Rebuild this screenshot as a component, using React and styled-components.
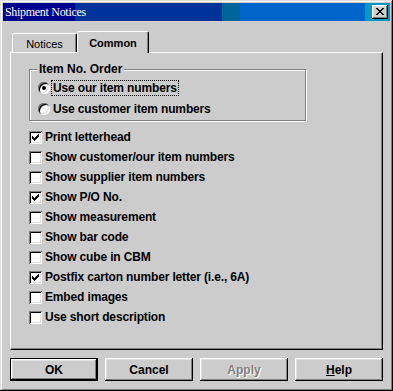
import React from 'react';
import styled, { createGlobalStyle, css } from 'styled-components';

const GlobalStyle = createGlobalStyle`
  html, body {
    margin: 0;
    padding: 0;
    background: #cccccc;
  }
  * { box-sizing: border-box; }
`;

const raised = css`
  box-shadow: inset -1px -1px #000000, inset 1px 1px #ffffff,
    inset -2px -2px #808080, inset 2px 2px #dfdfdf;
`;

const Window = styled.div`
  width: 393px;
  height: 391px;
  padding: 3px;
  background: #cccccc;
  display: flex;
  flex-direction: column;
  font-family: "Liberation Sans", Arial, sans-serif;
  font-size: 12px;
  font-weight: bold;
  color: #000;
  box-shadow: inset -1px -1px #000000, inset 1px 1px #dfdfdf,
    inset -2px -2px #808080, inset 2px 2px #ffffff;
`;

const TitleBar = styled.div`
  height: 18px;
  display: flex;
  align-items: center;
  justify-content: space-between;
  padding: 0 2px 0 2px;
  background: linear-gradient(
    to right,
    #00008e 0 72px,
    #003399 72px 219px,
    #006699 219px 237px,
    #0066cc 237px 362px,
    #0099cc 362px
  );
`;

const Title = styled.span`
  font-family: "Liberation Serif", "Times New Roman", serif;
  font-weight: normal;
  font-size: 12px;
  letter-spacing: -0.3px;
  color: #ffffff;
  line-height: 18px;
`;

const CloseButton = styled.div`
  width: 16px;
  height: 14px;
  background: #cccccc;
  display: flex;
  align-items: center;
  justify-content: center;
  padding-bottom: 1px;
  ${raised}
`;

const Body = styled.div`
  padding: 10px 7px 0 7px;
  display: flex;
  flex-direction: column;
`;

const TabStrip = styled.div`
  display: flex;
  align-items: flex-end;
  height: 21px;
  padding-left: 2px;
`;

const Tab = styled.div`
  position: relative;
  width: ${p => p.$width}px;
  height: ${p => (p.$active ? 22 : 19)}px;
  margin-bottom: ${p => (p.$active ? -1 : 0)}px;
  z-index: ${p => (p.$active ? 2 : 1)};
  background: #cccccc;
  border-top: 1px solid #ffffff;
  border-left: 1px solid #ffffff;
  border-right: 1px solid #000000;
  border-radius: 2px 2px 0 0;
  box-shadow: inset -1px 0 #808080;
  display: flex;
  align-items: center;
  justify-content: center;
  font-size: 11px;
  font-weight: ${p => (p.$active ? 'bold' : 'normal')};
  padding-top: ${p => (p.$active ? 0 : 1)}px;
`;

const Panel = styled.div`
  height: 298px;
  background: #cccccc;
  border-top: 1px solid #ffffff;
  border-left: 1px solid #ffffff;
  border-right: 1px solid #000000;
  border-bottom: 1px solid #000000;
  box-shadow: inset -1px -1px #808080;
  padding: 16px 0 0 18px;
`;

const GroupBox = styled.div`
  position: relative;
  width: 277px;
  border: 1px solid #808080;
  box-shadow: inset 1px 1px #ffffff, 1px 1px #ffffff;
  padding: 7px 0 1px 8px;
`;

const Legend = styled.span`
  position: absolute;
  top: -8px;
  left: 7px;
  padding: 0 2px;
  background: #cccccc;
  line-height: 14px;
`;

const OptionRow = styled.label`
  display: flex;
  align-items: center;
  height: ${p => p.$h}px;
  line-height: 14px;
`;

const Radio = styled.span`
  position: relative;
  width: 12px;
  height: 12px;
  flex: none;
  border-radius: 50%;
  background: #ffffff;
  box-shadow: inset 1px 1px #808080, inset -1px -1px #ffffff,
    inset 2px 2px #000000, inset -2px -2px #dfdfdf;
  margin-right: 2px;
  &::after {
    content: '';
    display: ${p => (p.$on ? 'block' : 'none')};
    position: absolute;
    left: 4px;
    top: 4px;
    width: 4px;
    height: 4px;
    border-radius: 50%;
    background: #000000;
  }
`;

const Label = styled.span`
  padding: 0 1px;
  outline: ${p => (p.$focus ? '1px dotted #000' : 'none')};
  letter-spacing: -0.15px;
`;

const CheckList = styled.div`
  margin-top: 6px;
  display: flex;
  flex-direction: column;
`;

const Box = styled.span`
  width: 13px;
  height: 13px;
  flex: none;
  background: #ffffff;
  box-shadow: inset 1px 1px #808080, inset -1px -1px #ffffff,
    inset 2px 2px #000000, inset -2px -2px #dfdfdf;
  margin-right: 2px;
  display: flex;
  align-items: flex-start;
  justify-content: flex-start;
  padding: 3px 0 0 3px;
`;

const ButtonRow = styled.div`
  margin-top: 8px;
  display: flex;
  justify-content: space-between;
`;

const Button = styled.div`
  width: 88px;
  height: 23px;
  background: #cccccc;
  display: flex;
  align-items: center;
  justify-content: center;
  ${raised}
  ${p =>
    p.$default &&
    css`
      box-shadow: inset 0 0 0 1px #000000, inset -2px -2px #000000,
        inset 2px 2px #ffffff, inset -3px -3px #808080,
        inset 3px 3px #dfdfdf;
    `}
  color: ${p => (p.$disabled ? '#808080' : '#000000')};
  text-shadow: ${p => (p.$disabled ? '1px 1px #ffffff' : 'none')};
  u { text-decoration-thickness: 1px; text-underline-offset: 1px; }
`;

const CloseIcon = () => (
  <svg width="8" height="7" viewBox="0 0 8 7" shapeRendering="crispEdges">
    <path
      fill="#000"
      d="M0 0h2v1h-2zM6 0h2v1h-2zM1 1h2v1h-2zM5 1h2v1h-2zM2 2h4v1h-4zM3 3h2v1h-2zM2 4h4v1h-4zM1 5h2v1h-2zM5 5h2v1h-2zM0 6h2v1h-2zM6 6h2v1h-2z"
    />
  </svg>
);

const CheckIcon = () => (
  <svg width="7" height="7" viewBox="0 0 7 7" shapeRendering="crispEdges">
    <path
      fill="#000"
      d="M6 0h1v1h-1zM5 1h2v1h-2zM0 2h1v1h-1zM4 2h3v1h-3zM0 3h2v1h-2zM3 3h3v1h-3zM0 4h5v1h-5zM1 5h3v1h-3zM2 6h1v1h-1z"
    />
  </svg>
);

const options = [
  { text: 'Print letterhead', on: true },
  { text: 'Show customer/our item numbers', on: false },
  { text: 'Show supplier item numbers', on: false },
  { text: 'Show P/O No.', on: true },
  { text: 'Show measurement', on: false },
  { text: 'Show bar code', on: false },
  { text: 'Show cube in CBM', on: false },
  { text: 'Postfix carton number letter (i.e., 6A)', on: true },
  { text: 'Embed images', on: false },
  { text: 'Use short description', on: false },
];

export default function App() {
  return (
    <>
      <GlobalStyle />
      <Window>
        <TitleBar>
          <Title>Shipment Notices</Title>
          <CloseButton>
            <CloseIcon />
          </CloseButton>
        </TitleBar>
        <Body>
          <TabStrip>
            <Tab $width={65}>Notices</Tab>
            <Tab $width={72} $active>Common</Tab>
          </TabStrip>
          <Panel>
            <GroupBox>
              <Legend>Item No. Order</Legend>
              <OptionRow $h={21}>
                <Radio $on />
                <Label $focus>Use our item numbers</Label>
              </OptionRow>
              <OptionRow $h={21}>
                <Radio />
                <Label>Use customer item numbers</Label>
              </OptionRow>
            </GroupBox>
            <CheckList>
              {options.map(o => (
                <OptionRow key={o.text} $h={20}>
                  <Box>{o.on && <CheckIcon />}</Box>
                  <Label>{o.text}</Label>
                </OptionRow>
              ))}
            </CheckList>
          </Panel>
          <ButtonRow>
            <Button $default>OK</Button>
            <Button>Cancel</Button>
            <Button $disabled>Apply</Button>
            <Button>
              <span><u>H</u>elp</span>
            </Button>
          </ButtonRow>
        </Body>
      </Window>
    </>
  );
}
